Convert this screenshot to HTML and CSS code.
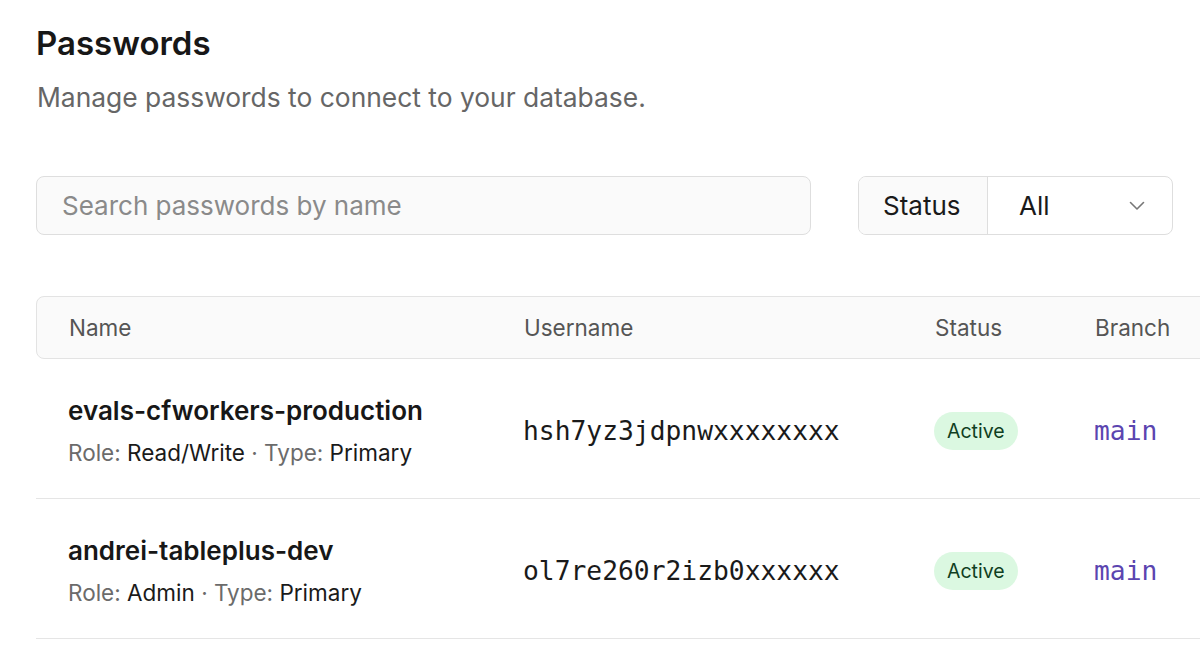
FILE: index.html
```html
<!DOCTYPE html>
<html lang="en">
  <head>
    <meta charset="utf-8" />
    <meta name="viewport" content="width=device-width, initial-scale=1.0">
    <title>Passwords</title>
    <link rel="stylesheet" href="styles.css">
  </head>
  <body>
    <div class="page">
      <h1 class="title">Passwords</h1>
      <p class="subtitle">Manage passwords to connect to your database.</p>

      <div class="filters">
        <input class="search" type="text" placeholder="Search passwords by name">
        <div class="status-filter">
          <span class="status-label">Status</span>
          <span class="status-select">
            All
            <svg width="16" height="10" viewBox="0 0 16 10" fill="none">
              <path d="M1.5 1.5 L8 8 L14.5 1.5" stroke="#777" stroke-width="1.6" stroke-linecap="round" stroke-linejoin="round"/>
            </svg>
          </span>
        </div>
      </div>

      <div class="table">
        <div class="row head">
          <div>Name</div>
          <div>Username</div>
          <div>Status</div>
          <div>Branch</div>
        </div>

        <div class="row item">
          <div class="name-cell">
            <div class="pw-name">evals-cfworkers-production</div>
            <div class="pw-meta"><span class="k">Role:</span> Read/Write <span class="k">· Type:</span> Primary</div>
          </div>
          <div class="mono">hsh7yz3jdpnwxxxxxxxx</div>
          <div><span class="badge">Active</span></div>
          <div class="mono branch">main</div>
        </div>

        <div class="row item">
          <div class="name-cell">
            <div class="pw-name">andrei-tableplus-dev</div>
            <div class="pw-meta"><span class="k">Role:</span> Admin <span class="k">· Type:</span> Primary</div>
          </div>
          <div class="mono">ol7re260r2izb0xxxxxx</div>
          <div><span class="badge">Active</span></div>
          <div class="mono branch">main</div>
        </div>
      </div>
    </div>
  </body>
</html>
```

FILE: styles.css
```css
body {
  margin: 0;
  background: #fff;
  font-family: Inter, "Noto Sans", sans-serif;
  color: #1a1a1a;
  overflow: hidden;
}

.page {
  padding: 0 0 0 36px;
  width: 1164px;
}

.title {
  margin: 0;
  padding-top: 23px;
  font-size: 33px;
  font-weight: 600;
  line-height: 40px;
  color: #171717;
}

.subtitle {
  margin: 18px 0 0 1px;
  font-size: 26.4px;
  line-height: 32px;
  color: #666;
}

.filters {
  display: flex;
  gap: 47px;
  margin-top: 63px;
  width: 1137px;
}

.search {
  flex: 0 0 775px;
  height: 59px;
  box-sizing: border-box;
  border: 1.5px solid #dedede;
  border-radius: 8px;
  background: #fafafa;
  padding: 0 25px;
  font-family: inherit;
  font-size: 26px;
  color: #222;
}

.search::placeholder {
  color: #8a8a8a;
}

.status-filter {
  display: flex;
  width: 315px;
  height: 59px;
  box-sizing: border-box;
  border: 1.5px solid #dedede;
  border-radius: 8px;
  overflow: hidden;
  font-size: 26px;
  color: #1a1a1a;
}

.status-label {
  display: flex;
  align-items: center;
  width: 129px;
  padding-left: 24px;
  box-sizing: border-box;
  background: #fafafa;
  border-right: 1.5px solid #dedede;
}

.status-select {
  flex: 1;
  display: flex;
  align-items: center;
  justify-content: space-between;
  padding: 0 27px 0 31px;
}

.table {
  margin-top: 61px;
  margin-right: -40px;
}

.row {
  display: grid;
  grid-template-columns: 455px 411px 160px 1fr;
  padding-left: 32px;
  align-items: center;
}

.head {
  height: 63px;
  box-sizing: border-box;
  border: 1.5px solid #e3e3e3;
  border-radius: 8px 0 0 8px;
  background: #fafafa;
  font-size: 22.5px;
  color: #555;
}

.item {
  height: 140px;
  box-sizing: border-box;
  padding-top: 5px;
  border-bottom: 1.5px solid #e5e5e5;
}

.pw-name {
  font-size: 26px;
  font-weight: 600;
  color: #171717;
  line-height: 32px;
}

.pw-meta {
  margin-top: 12px;
  font-size: 22.5px;
  line-height: 28px;
  color: #1a1a1a;
}

.pw-meta .k {
  color: #6b6b6b;
}

.mono {
  font-family: "DejaVu Sans Mono", monospace;
  font-size: 26.3px;
  color: #1a1a1a;
}

.branch {
  color: #5b45b0;
}

.badge {
  display: inline-block;
  padding: 5px 13px;
  border-radius: 20px;
  background: #dbf8e1;
  color: #103f22;
  font-size: 19.5px;
  line-height: 28px;
}
```
